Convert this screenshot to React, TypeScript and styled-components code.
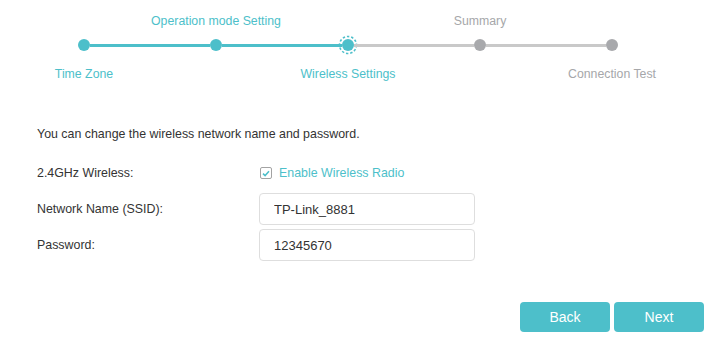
import React, { ReactElement, useState } from "react";
import styled, { createGlobalStyle } from "styled-components";

const TEAL = "#4dbfca";
const GREY_TEXT = "#a6a7aa";
const GREY_DOT = "#a8a9ac";
const GREY_LINE = "#c9c9c9";

const GlobalStyle = createGlobalStyle`
  body {
    margin: 0;
    background: #fff;
    font-family: "Liberation Sans", Arial, sans-serif;
    color: #333;
  }
`;

const Page = styled.div`
  width: 725px;
  height: 349px;
  overflow: hidden;
  display: flex;
  flex-direction: column;
`;

const Stepper = styled.div`
  margin-left: 18px;
  width: 660px;
  padding-top: 14px;
  display: flex;
  flex-direction: column;
`;

const LabelRow = styled.div<{ $gap: number }>`
  display: grid;
  grid-template-columns: repeat(5, 132px);
  margin-top: ${(p) => p.$gap}px;
  height: 14px;
`;

const StepLabel = styled.span<{ $active: boolean }>`
  text-align: center;
  font-size: 12.3px;
  line-height: 14px;
  white-space: nowrap;
  color: ${(p) => (p.$active ? TEAL : GREY_TEXT)};
`;

const Track = styled.div`
  display: flex;
  align-items: center;
  height: 20px;
  margin-top: 7px;
  padding: 0 56px;
`;

const DotSlot = styled.div`
  width: 20px;
  height: 20px;
  display: flex;
  align-items: center;
  justify-content: center;
  flex: none;
`;

const Dot = styled.span<{ $done: boolean }>`
  width: 12px;
  height: 12px;
  border-radius: 50%;
  background: ${(p) => (p.$done ? TEAL : GREY_DOT)};
`;

const Connector = styled.span<{ $done: boolean }>`
  flex: 1;
  height: 3px;
  margin: 0 -4px;
  background: ${(p) => (p.$done ? TEAL : GREY_LINE)};
`;

const Intro = styled.p`
  margin: 46px 0 0 37px;
  font-size: 12.4px;
  line-height: 14px;
  color: #333;
`;

const Form = styled.div`
  margin: 16px 0 0 37px;
  display: flex;
  flex-direction: column;
  gap: 4px;
`;

const Row = styled.div`
  display: grid;
  grid-template-columns: 222px 216px;
  align-items: center;
  height: 32px;
`;

const FieldLabel = styled.label`
  font-size: 12.4px;
  color: #333;
`;

const CheckWrap = styled.label`
  display: flex;
  align-items: center;
  gap: 7px;
  padding-left: 1px;
  font-size: 12.4px;
  color: ${TEAL};
  cursor: pointer;
`;

const CheckBox = styled.span`
  width: 10px;
  height: 10px;
  border: 1px solid #a3a3a3;
  border-radius: 2px;
  display: flex;
  align-items: center;
  justify-content: center;
`;

const TextInput = styled.input`
  box-sizing: border-box;
  width: 216px;
  height: 32px;
  padding: 0 14px;
  border: 1px solid #dedede;
  border-radius: 4px;
  outline: none;
  font-family: "Liberation Sans", Arial, sans-serif;
  font-size: 13px;
  color: #333;
  &:focus {
    border-color: ${TEAL};
  }
`;

const Footer = styled.div`
  margin-top: 41px;
  padding-right: 21px;
  display: flex;
  justify-content: flex-end;
  gap: 4px;
`;

const Button = styled.button`
  width: 90px;
  height: 30px;
  border: none;
  border-radius: 4px;
  background: ${TEAL};
  color: #fff;
  font-family: "Liberation Sans", Arial, sans-serif;
  font-size: 14px;
  cursor: pointer;
`;

const steps = [
  { name: "Time Zone", top: false },
  { name: "Operation mode Setting", top: true },
  { name: "Wireless Settings", top: false },
  { name: "Summary", top: true },
  { name: "Connection Test", top: false },
];

const current = 2;

function CurrentDot(): ReactElement {
  return (
    <svg width="20" height="20" viewBox="0 0 20 20">
      <circle cx="10" cy="10" r="8.5" fill="none" stroke={TEAL} strokeWidth="1.6" strokeDasharray="2.4 1.9" />
      <circle cx="10" cy="10" r="6" fill={TEAL} />
    </svg>
  );
}

export default function App(): ReactElement {
  const [enabled, setEnabled] = useState(true);
  const [ssid, setSsid] = useState("TP-Link_8881");
  const [password, setPassword] = useState("12345670");

  return (
    <Page>
      <GlobalStyle />
      <Stepper>
        <LabelRow $gap={0}>
          {steps.map((s, i) => (
            <StepLabel key={s.name} $active={i <= current}>
              {s.top ? s.name : ""}
            </StepLabel>
          ))}
        </LabelRow>
        <Track>
          {steps.map((s, i) => (
            <React.Fragment key={s.name}>
              {i > 0 && <Connector $done={i <= current} />}
              <DotSlot>{i === current ? <CurrentDot /> : <Dot $done={i < current} />}</DotSlot>
            </React.Fragment>
          ))}
        </Track>
        <LabelRow $gap={12}>
          {steps.map((s, i) => (
            <StepLabel key={s.name} $active={i <= current}>
              {s.top ? "" : s.name}
            </StepLabel>
          ))}
        </LabelRow>
      </Stepper>

      <Intro>You can change the wireless network name and password.</Intro>

      <Form>
        <Row>
          <FieldLabel>2.4GHz Wireless:</FieldLabel>
          <CheckWrap onClick={() => setEnabled(!enabled)}>
            <CheckBox>
              {enabled && (
                <svg width="8" height="7" viewBox="0 0 8 7">
                  <path d="M1 3.6 L3.1 5.6 L7 1.2" fill="none" stroke={TEAL} strokeWidth="1.5" />
                </svg>
              )}
            </CheckBox>
            Enable Wireless Radio
          </CheckWrap>
        </Row>
        <Row>
          <FieldLabel htmlFor="ssid">Network Name (SSID):</FieldLabel>
          <TextInput id="ssid" value={ssid} onChange={(e) => setSsid(e.currentTarget.value)} />
        </Row>
        <Row>
          <FieldLabel htmlFor="pwd">Password:</FieldLabel>
          <TextInput id="pwd" value={password} onChange={(e) => setPassword(e.currentTarget.value)} />
        </Row>
      </Form>

      <Footer>
        <Button>Back</Button>
        <Button>Next</Button>
      </Footer>
    </Page>
  );
}
